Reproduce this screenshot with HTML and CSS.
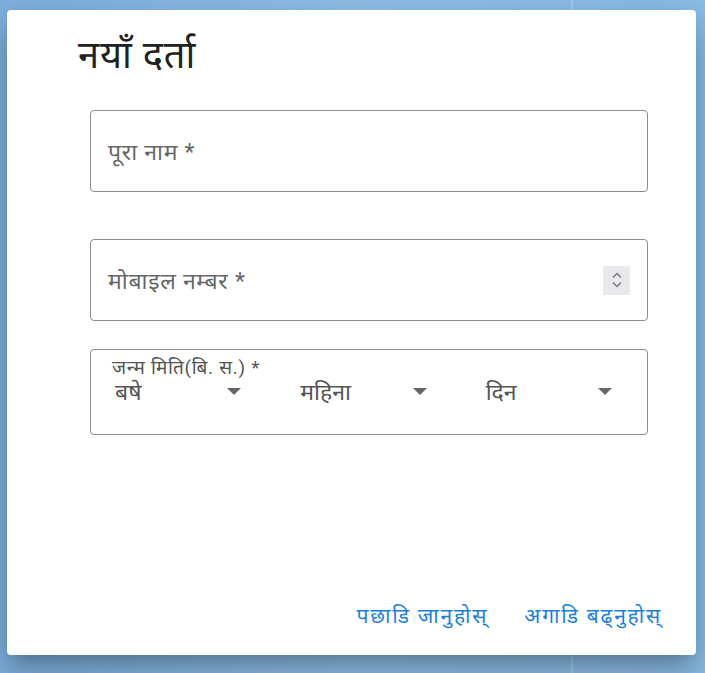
FILE: index.html
```html
<!DOCTYPE html>
<html lang="ne">
   <head>
      <meta charset="UTF-8"/>
      <title>नयाँ दर्ता</title>
      <link rel="stylesheet" href="styles.css">
   </head>
   <body>
      <div class="backdrop">
         <div class="dialog">
            <h2 class="dialog-title">नयाँ दर्ता</h2>

            <div class="dialog-content">
               <div class="field">
                  <span class="field-label">पूरा नाम *</span>
               </div>

               <div class="field">
                  <span class="field-label">मोबाइल नम्बर *</span>
                  <span class="spinner">
                     <svg width="12" height="20" viewBox="0 0 12 20">
                        <path d="M2 7.5 L6 3.5 L10 7.5 M2 12.5 L6 16.5 L10 12.5" fill="none" stroke="#7a7a86" stroke-width="1.5"/>
                     </svg>
                  </span>
               </div>

               <div class="field date-field">
                  <span class="date-label">जन्म मिति(बि. स.) *</span>
                  <div class="date-selects">
                     <div class="select"><span>बषे</span><span class="arrow"></span></div>
                     <div class="select"><span>महिना</span><span class="arrow"></span></div>
                     <div class="select"><span>दिन</span><span class="arrow"></span></div>
                  </div>
               </div>
            </div>

            <div class="dialog-actions">
               <button class="text-btn">पछाडि जानुहोस्</button>
               <button class="text-btn">अगाडि बढ्नुहोस्</button>
            </div>
         </div>
      </div>
   </body>
</html>
```

FILE: styles.css
```css
html, body {
   margin: 0;
   padding: 0;
   height: 100%;
}

body {
   font-family: Roboto, "Noto Sans", sans-serif;
   background: linear-gradient(90deg, #7fb3e2 0%, #92c3ec 50%, #8cbfea 100%);
}

.backdrop {
   height: 100%;
   padding: 10px 9px 18px 7px;
   box-sizing: border-box;
   background: linear-gradient(90deg, transparent 571px, #a9cff0 571px, #a9cff0 573px, transparent 573px);
}

.dialog {
   height: 100%;
   background: #fff;
   border-radius: 4px;
   box-shadow: 0 11px 15px -7px rgba(0,0,0,0.2), 0 24px 38px 3px rgba(0,0,0,0.14), 0 9px 46px 8px rgba(0,0,0,0.12);
   display: flex;
   flex-direction: column;
   box-sizing: border-box;
}

.dialog-title {
   margin: 0;
   padding: 20px 0 0 71px;
   font-size: 38px;
   font-weight: 400;
   color: #212121;
   line-height: 50px;
   letter-spacing: 0.8px;
}

.dialog-content {
   padding: 30px 48px 0 83px;
   display: flex;
   flex-direction: column;
   gap: 47px;
   flex: 1;
}

.field {
   height: 82px;
   border: 1px solid #8c8c8c;
   border-radius: 4px;
   box-sizing: border-box;
   display: flex;
   align-items: center;
   padding: 0 17px;
}

.field + .field + .field {
   margin-top: -19px;
}

.field-label {
   font-size: 23px;
   color: #666;
   flex: 1;
   letter-spacing: 0.7px;
}

.spinner {
   width: 27px;
   height: 29px;
   background: #e9e9ed;
   display: flex;
   align-items: center;
   justify-content: center;
}

.date-field {
   height: 86px;
   flex-direction: column;
   align-items: stretch;
   justify-content: flex-start;
   padding: 7px 34px 0 21px;
}

.date-label {
   font-size: 19px;
   color: #555;
   line-height: 22px;
   letter-spacing: 0.7px;
}

.date-selects {
   display: flex;
   gap: 55px;
}

.select {
   flex: 1;
   display: flex;
   align-items: center;
   justify-content: space-between;
   font-size: 23px;
   color: #555;
   line-height: 28px;
   padding: 0 1px 0 3px;
}

.arrow {
   width: 0;
   height: 0;
   border-left: 7px solid transparent;
   border-right: 7px solid transparent;
   border-top: 7px solid #666;
   margin-top: -4px;
}

.dialog-actions {
   display: flex;
   justify-content: flex-end;
   gap: 20px;
   padding: 0 26px 20px 0;
}

.text-btn {
   background: none;
   border: none;
   font-family: inherit;
   font-size: 21px;
   letter-spacing: 1.8px;
   color: #1e7fd6;
   padding: 6px 8px;
   cursor: pointer;
}
```
